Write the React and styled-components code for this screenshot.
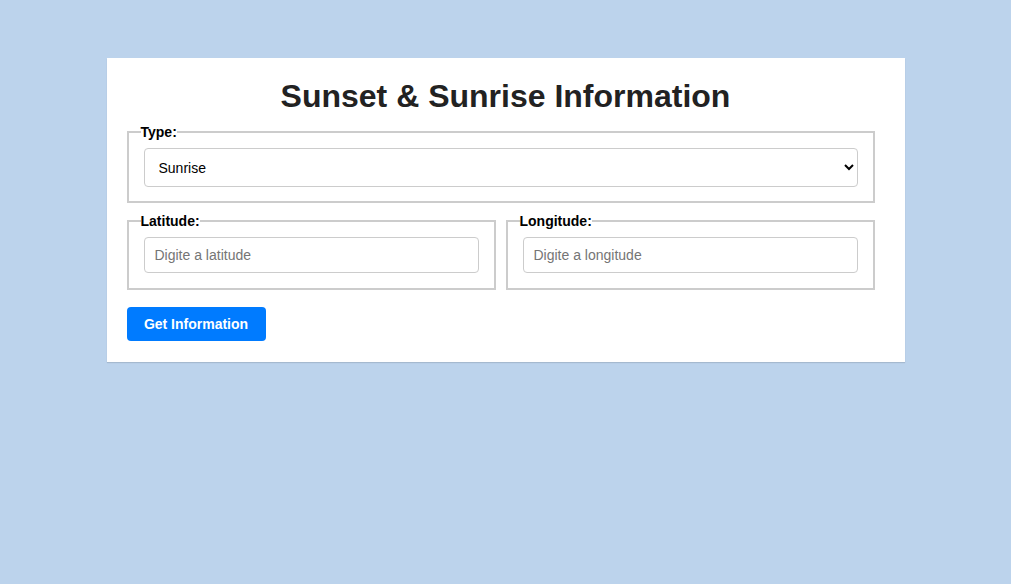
import React from 'react';
import styled, { createGlobalStyle } from 'styled-components';

const GlobalStyle = createGlobalStyle`
  html, body {
    margin: 0;
    padding: 0;
    background: #bcd3ec;
    font-family: 'Liberation Sans', Arial, sans-serif;
  }
`;

const Page = styled.div`
  min-height: 584px;
  padding-top: 58px;
  box-sizing: border-box;
`;

const Card = styled.div`
  width: 798px;
  margin: 0 auto;
  padding: 20px 20px 21px;
  box-sizing: border-box;
  background: #fff;
  box-shadow: 0 1px 1px rgba(0, 0, 0, 0.12);
`;

const Title = styled.h1`
  margin: 0 0 9px;
  color: #222;
  font-size: 32px;
  line-height: 37px;
  font-weight: bold;
  text-align: center;
`;

const Row = styled.div`
  display: flex;
`;

const Fieldset = styled.fieldset`
  flex: 1;
  min-width: 0;
  margin: 0 10px 10px 0;
  padding: 0 15px ${p => (p.$tall ? '14px' : '15px')};
  border: 2px solid #ccc;
`;

const Legend = styled.legend`
  margin-left: -3px;
  padding: 0;
  margin-bottom: 8px;
  color: #000;
  font-size: 14px;
  line-height: 16px;
  font-weight: bold;
`;

const Select = styled.select`
  display: block;
  width: 100%;
  height: 39px;
  padding: 0 10px;
  box-sizing: border-box;
  border: 1px solid #ccc;
  border-radius: 4px;
  background: #fff;
  color: #000;
  font-family: 'Liberation Sans', Arial, sans-serif;
  font-size: 14px;
`;

const Input = styled.input`
  display: block;
  width: 100%;
  height: 36px;
  padding: 0 10px;
  box-sizing: border-box;
  border: 1px solid #ccc;
  border-radius: 4px;
  font-family: 'Liberation Sans', Arial, sans-serif;
  font-size: 14px;

  ::placeholder {
    color: #757575;
  }
`;

const Button = styled.button`
  display: block;
  width: 139px;
  margin-top: 7px;
  padding: 9px 0;
  border: none;
  border-radius: 4px;
  background: #007bff;
  color: #fff;
  font-family: 'Liberation Sans', Arial, sans-serif;
  font-size: 14px;
  line-height: 16px;
  font-weight: bold;
  text-align: center;
  cursor: pointer;
`;

const App = () => {
  return (
    <Page>
      <GlobalStyle />
      <Card>
        <Title>Sunset &amp; Sunrise Information</Title>
        <Row>
          <Fieldset $tall>
            <Legend>Type:</Legend>
            <Select defaultValue="sunrise">
              <option value="sunrise">Sunrise</option>
              <option value="sunset">Sunset</option>
            </Select>
          </Fieldset>
        </Row>
        <Row>
          <Fieldset>
            <Legend>Latitude:</Legend>
            <Input type="text" placeholder="Digite a latitude" />
          </Fieldset>
          <Fieldset>
            <Legend>Longitude:</Legend>
            <Input type="text" placeholder="Digite a longitude" />
          </Fieldset>
        </Row>
        <Button type="button">Get Information</Button>
      </Card>
    </Page>
  );
};

export default App;
